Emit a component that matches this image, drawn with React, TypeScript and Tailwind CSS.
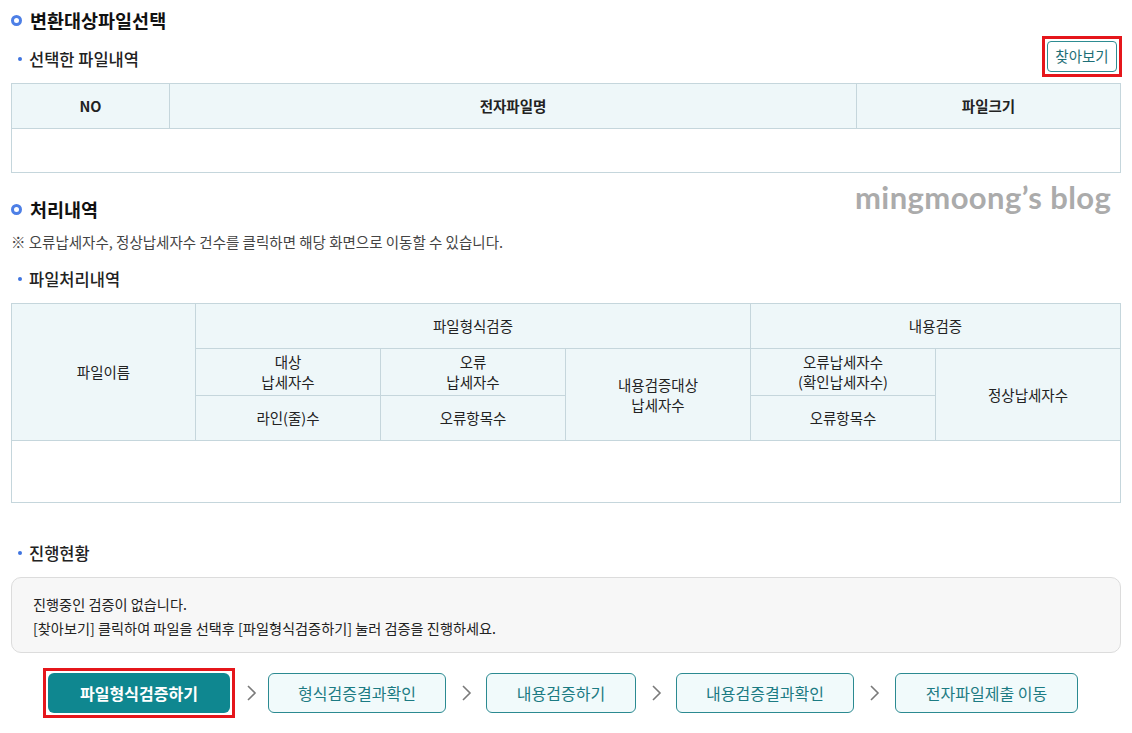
import React from 'react';

const font = { fontFamily: '"Noto Sans CJK KR", "Noto Sans", sans-serif' };

const SectionTitle = ({ children }: { children: React.ReactNode }) => (
  <h2 className="flex items-center h-6 text-[18.5px] font-bold text-[#111] leading-6">
    <span className="w-[11px] h-[11px] rounded-full border-[3px] border-[#4d7fe6] mr-[8px]" />
    {children}
  </h2>
);

const SubTitle = ({ children }: { children: React.ReactNode }) => (
  <h3 className="flex items-center h-[22px] text-[16.5px] font-medium text-[#222] leading-[22px]">
    <span className="w-[4px] h-[4px] rounded-full bg-[#3f74e0] ml-[7px] mr-[7px]" />
    {children}
  </h3>
);

const Chevron = ({ w }: { w: string }) => (
  <span className={`flex justify-center items-center ${w}`}>
    <svg width="11" height="18" viewBox="0 0 11 18" fill="none">
      <polyline points="2,2 9,9 2,16" stroke="#7a7a7a" strokeWidth="1.6" />
    </svg>
  </span>
);

const th = 'border border-[#c5d6dc] bg-[#eef7f9] font-normal text-[14.5px] text-[#222] leading-[20px]';
const stepBtn = 'h-[40px] rounded-[6px] border border-[#2b8a91] bg-[#f1fafb] text-[16px] text-[#1c7b83]';

export default function App() {
  return (
    <div className="relative w-[1132px] h-[733px] bg-white px-[11px] pt-[8px] overflow-hidden" style={font}>
      <SectionTitle>변환대상파일선택</SectionTitle>

      <div className="mt-[3px] h-[42px] flex items-center justify-between">
        <div className="pt-[6px]">
          <SubTitle>선택한 파일내역</SubTitle>
        </div>
        <div className="border-[3px] border-[#e5161b] p-[2px] mr-[-1px]">
          <button className="w-[70px] h-[31px] rounded-[4px] border border-[#2e8c92] bg-white text-[14.5px] text-[#1e6f77]">
            찾아보기
          </button>
        </div>
      </div>

      <table className="mt-[6px] w-full border-collapse table-fixed">
        <colgroup>
          <col className="w-[158px]" />
          <col className="w-[687px]" />
          <col />
        </colgroup>
        <thead>
          <tr className="h-[45px]">
            <th className={`${th} font-semibold`}>NO</th>
            <th className={`${th} font-semibold`}>전자파일명</th>
            <th className={`${th} font-semibold`}>파일크기</th>
          </tr>
        </thead>
        <tbody>
          <tr className="h-[44px]">
            <td colSpan={3} className="border border-[#c5d6dc]" />
          </tr>
        </tbody>
      </table>

      <div
        className="absolute left-[855px] top-[174px] text-[31px] font-bold text-[#ababab] tracking-[0.4px]"
        style={{ fontFamily: 'Lato, "Open Sans", sans-serif' }}
      >
        mingmoong’s blog
      </div>

      <div className="mt-[24px]">
        <SectionTitle>처리내역</SectionTitle>
      </div>
      <p className="mt-[12px] text-[14.5px] leading-[18px] text-[#444]">
        ※ 오류납세자수, 정상납세자수 건수를 클릭하면 해당 화면으로 이동할 수 있습니다.
      </p>
      <div className="mt-[17px]">
        <SubTitle>파일처리내역</SubTitle>
      </div>

      <table className="mt-[13px] w-full border-collapse table-fixed">
        <colgroup>
          <col className="w-[184px]" />
          <col className="w-[185px]" />
          <col className="w-[185px]" />
          <col className="w-[185px]" />
          <col className="w-[185px]" />
          <col />
        </colgroup>
        <thead>
          <tr className="h-[45px]">
            <th rowSpan={3} className={th}>파일이름</th>
            <th colSpan={3} className={th}>파일형식검증</th>
            <th colSpan={2} className={th}>내용검증</th>
          </tr>
          <tr className="h-[47px]">
            <th className={th}>대상<br />납세자수</th>
            <th className={th}>오류<br />납세자수</th>
            <th rowSpan={2} className={th}>내용검증대상<br />납세자수</th>
            <th className={th}>오류납세자수<br />(확인납세자수)</th>
            <th rowSpan={2} className={th}>정상납세자수</th>
          </tr>
          <tr className="h-[45px]">
            <th className={th}>라인(줄)수</th>
            <th className={th}>오류항목수</th>
            <th className={th}>오류항목수</th>
          </tr>
        </thead>
        <tbody>
          <tr className="h-[62px]">
            <td colSpan={6} className="border border-[#c5d6dc]" />
          </tr>
        </tbody>
      </table>

      <div className="mt-[39px]">
        <SubTitle>진행현황</SubTitle>
      </div>

      <div className="mt-[13px] h-[76px] rounded-[10px] border border-[#dcdcdc] bg-[#f7f7f7] pl-[21px] pt-[14px] text-[14.2px] leading-[24px] text-[#222]">
        <p>진행중인 검증이 없습니다.</p>
        <p>[찾아보기] 클릭하여 파일을 선택후 [파일형식검증하기] 눌러 검증을 진행하세요.</p>
      </div>

      <div className="mt-[15px] flex items-center pl-[32px]">
        <div className="border-[3px] border-[#e5161b] p-[2px]">
          <button className="w-[182px] h-[40px] rounded-[6px] bg-[#0f8790] text-white text-[16px] font-bold">
            파일형식검증하기
          </button>
        </div>
        <Chevron w="w-[33px]" />
        <button className={`${stepBtn} w-[178px]`}>형식검증결과확인</button>
        <Chevron w="w-[40px]" />
        <button className={`${stepBtn} w-[150px]`}>내용검증하기</button>
        <Chevron w="w-[40px]" />
        <button className={`${stepBtn} w-[178px]`}>내용검증결과확인</button>
        <Chevron w="w-[41px]" />
        <button className={`${stepBtn} w-[183px]`}>전자파일제출 이동</button>
      </div>
    </div>
  );
}
